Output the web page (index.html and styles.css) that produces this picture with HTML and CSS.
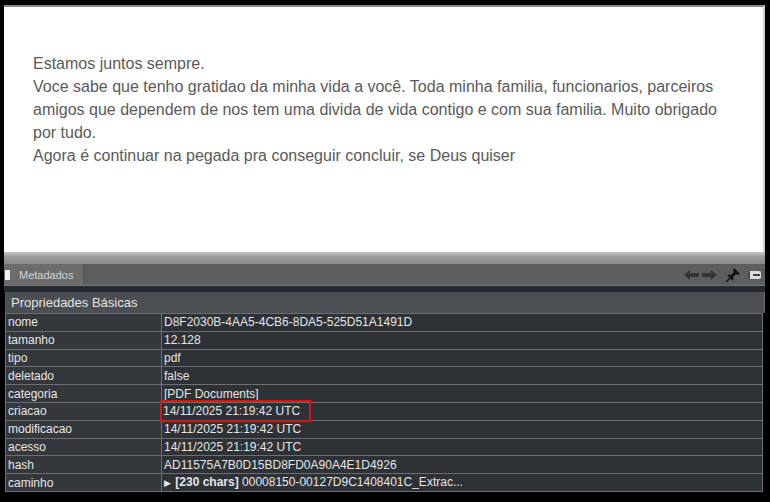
FILE: index.html
```html
<!DOCTYPE html>
<html>
<head>
<meta charset="utf-8">
<link rel="stylesheet" href="styles.css">
</head>
<body>
<div class="frame">
  <div class="doc">
    <div class="msg">
      <p>Estamos juntos sempre.</p>
      <p>Voce sabe que tenho gratidao da minha vida a você. Toda minha familia, funcionarios, parceiros amigos que dependem de nos tem uma divida de vida contigo e com sua familia. Muito obrigado por tudo.</p>
      <p>Agora é continuar na pegada pra conseguir concluir, se Deus quiser</p>
    </div>
  </div>
  <div class="splitter"></div>
  <div class="tabbar">
    <div class="tab"><span class="tabicon"></span><span>Metadados</span></div>
    <div class="tools">
      <svg class="arr" width="17" height="12" viewBox="0 0 17 12"><path d="M1 6 L7 1 L7 4 L16 4 L16 8 L7 8 L7 11 Z" fill="#353535"/></svg>
      <svg class="arr" width="17" height="12" viewBox="0 0 17 12"><path d="M16 6 L10 1 L10 4 L1 4 L1 8 L10 8 L10 11 Z" fill="#353535"/></svg>
      <svg class="pin" width="16" height="16" viewBox="0 0 16 16"><path d="M9 1 L15 7 L13 8 L11 7 L8 10 L8.5 12.5 L7.5 13.5 L2.5 8.5 L3.5 7.5 L6 8 L9 5 L8 3 Z" fill="#111"/><path d="M5 11 L1 15" stroke="#111" stroke-width="1.4"/></svg>
      <span class="minbtn"><span></span></span>
    </div>
  </div>
  <div class="divider"></div>
  <div class="panel">
    <div class="phead">Propriedades Básicas</div>
    <table class="props">
      <tr><td class="k">nome</td><td class="v">D8F2030B-4AA5-4CB6-8DA5-525D51A1491D</td></tr>
      <tr><td class="k">tamanho</td><td class="v">12.128</td></tr>
      <tr><td class="k">tipo</td><td class="v">pdf</td></tr>
      <tr><td class="k">deletado</td><td class="v">false</td></tr>
      <tr><td class="k">categoria</td><td class="v">[PDF Documents]</td></tr>
      <tr><td class="k">criacao</td><td class="v"><span class="mark">14/11/2025 21:19:42 UTC</span></td></tr>
      <tr><td class="k">modificacao</td><td class="v">14/11/2025 21:19:42 UTC</td></tr>
      <tr><td class="k">acesso</td><td class="v">14/11/2025 21:19:42 UTC</td></tr>
      <tr><td class="k">hash</td><td class="v">AD11575A7B0D15BD8FD0A90A4E1D4926</td></tr>
      <tr><td class="k">caminho</td><td class="v"><span class="tri">&#9654;</span> <b>[230 chars]</b> 00008150-00127D9C1408401C_Extrac...</td></tr>
    </table>
  </div>
</div>
</body>
</html>
```

FILE: styles.css
```css
html, body {
  margin: 0;
  padding: 0;
  background: #000;
}
.frame {
  width: 770px;
  height: 502px;
  background: #000;
  box-sizing: border-box;
  padding: 5px 5px 0 4px;
  display: flex;
  flex-direction: column;
  font-family: "Liberation Sans", Arial, sans-serif;
}
.doc {
  height: 247px;
  background: #fff;
  border-top: 2px solid #8a8a8a;
  border-right: 2px solid #d0d0d0;
  box-sizing: border-box;
  padding-top: 45px;
  padding-left: 29px;
}
.msg {
  width: 700px;
  font-family: "Liberation Sans", Arial, sans-serif;
  font-size: 16px;
  line-height: 23px;
  color: #5a5a5a;
}
.msg p {
  margin: 0;
}
.splitter {
  height: 12px;
  background: linear-gradient(#c8c8c8, #9a9a9a 40%, #8a8a8a);
}
.tabbar {
  height: 21px;
  background: #5e5e5e;
  display: flex;
  align-items: stretch;
  justify-content: space-between;
  border-bottom: 1px solid #777;
}
.tab {
  width: 79px;
  background: #6c6c6c;
  display: flex;
  align-items: center;
  gap: 9px;
  color: #d0d0d0;
  font-size: 11px;
  border-right: 1px solid #555;
}
.tabicon {
  width: 5px;
  height: 10px;
  background: #f2f2f2;
  margin-left: 1px;
}
.tools {
  display: flex;
  align-items: center;
  gap: 1px;
  padding-right: 4px;
}
.pin {
  margin-left: 6px;
  margin-right: 6px;
}
.minbtn {
  width: 10px;
  height: 8px;
  background: #dcdcdc;
  border-radius: 2px;
  display: flex;
  align-items: center;
  justify-content: center;
  border-left: 2px solid #4a4a4a;
  padding-left: 1px;
}
.minbtn span {
  width: 7px;
  height: 2px;
  background: #444;
}
.divider {
  height: 6px;
  background: #252a30;
}
.panel {
  flex: 1;
  background: #000;
  margin-left: 1px;
}
.phead {
  height: 21px;
  background: #4b4e53;
  color: #e4e4e4;
  font-size: 13px;
  line-height: 21px;
  padding-left: 5px;
  border-left: 1px solid #555;
  border-right: 1px solid #6a6e73;
}
.props {
  width: 758px;
  border-collapse: collapse;
  font-size: 12px;
  color: #e6e6e6;
}
.props td {
  height: 16.8px;
  border: 1px solid #6c7075;
  padding: 0 0 0 2px;
  background: #2e3236;
  line-height: 16px;
  white-space: nowrap;
}
.props td.k {
  width: 153px;
  background: #34383d;
}
.mark {
  outline: 2px solid #d01818;
  outline-offset: 1px;
  padding: 1px 8px 1px 0;
  margin-left: -1px;
}
.tri {
  font-size: 9px;
  margin-right: 1px;
}
```
